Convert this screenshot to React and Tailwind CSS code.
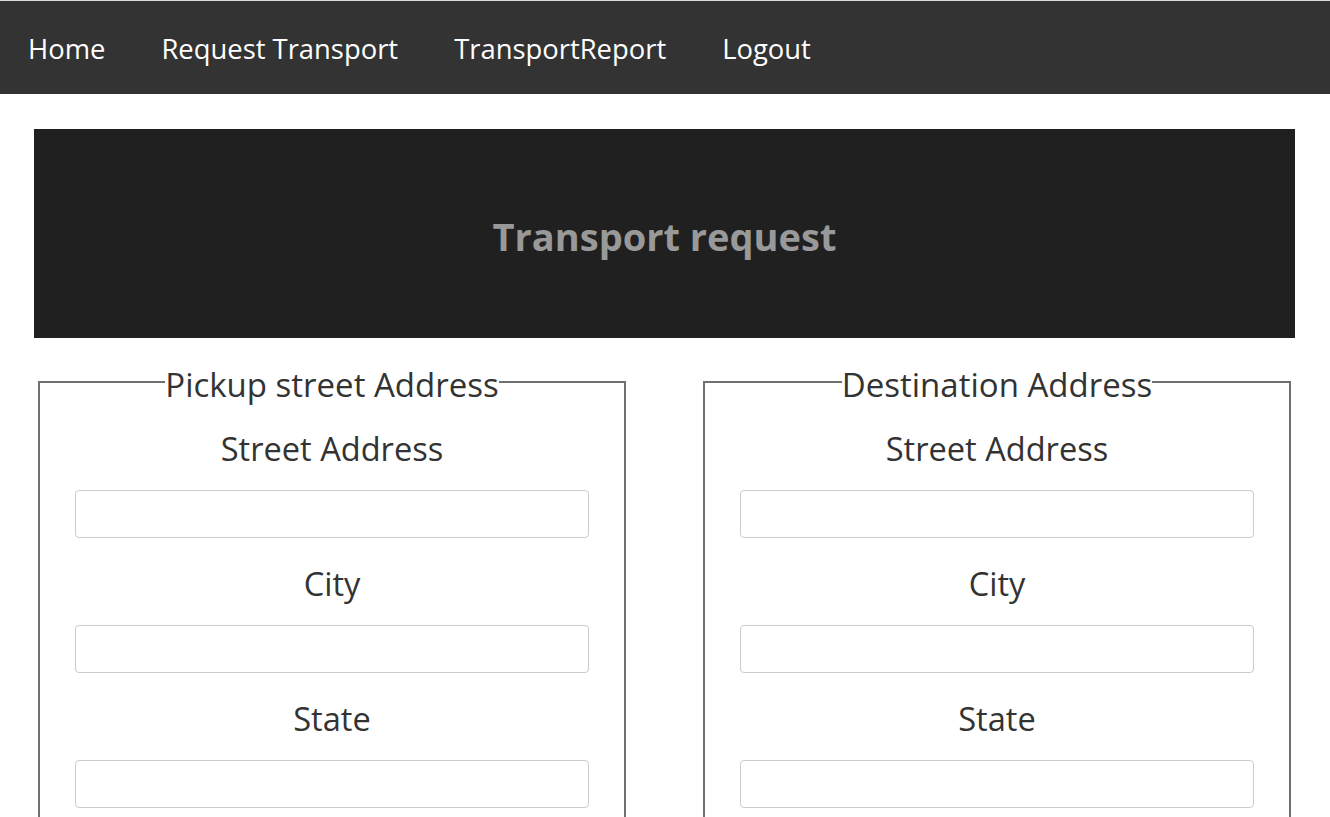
import React from "react";

const links = ["Home", "Request Transport", "TransportReport", "Logout"];

function AddressFieldset({ legend }) {
  const fields = ["Street Address", "City", "State"];
  return (
    <fieldset className="w-[588px] border-2 border-[#707070] px-[35px] pb-[40px]">
      <legend className="mx-auto px-0 pt-[6px] text-[33px] leading-[37px] text-[#333]">{legend}</legend>
      <div className="flex flex-col pt-[24px]">
        {fields.map((f) => (
          <div key={f} className="flex flex-col">
            <label className="text-center text-[32.6px] leading-[43px] text-[#333]">{f}</label>
            <input
              type="text"
              className="mt-[20px] mb-[24px] h-[48px] w-full rounded-[4px] border border-[#ccc] bg-white px-3 text-[20px] outline-none"
            />
          </div>
        ))}
      </div>
    </fieldset>
  );
}

export default function App() {
  return (
    <div className="min-h-screen bg-white" style={{ fontFamily: '"Segoe UI", "Open Sans", "Noto Sans", sans-serif' }}>
      <nav className="flex h-[94px] items-center border-t border-[#dcdcdc] bg-[#333]">
        {links.map((l) => (
          <a key={l} href="#" className="px-[28px] pt-[3px] text-[27.4px] text-white">
            {l}
          </a>
        ))}
      </nav>
      <main className="pl-[34px] pr-[35px] pt-[35px]">
        <div className="flex h-[209px] items-center justify-center bg-[#202020]">
          <h1 className="pt-[6px] text-[38px] font-bold text-[#999]">Transport request</h1>
        </div>
        <div className="mt-[22px] flex justify-between px-[4px]">
          <AddressFieldset legend="Pickup street Address" />
          <AddressFieldset legend="Destination Address" />
        </div>
      </main>
    </div>
  );
}
